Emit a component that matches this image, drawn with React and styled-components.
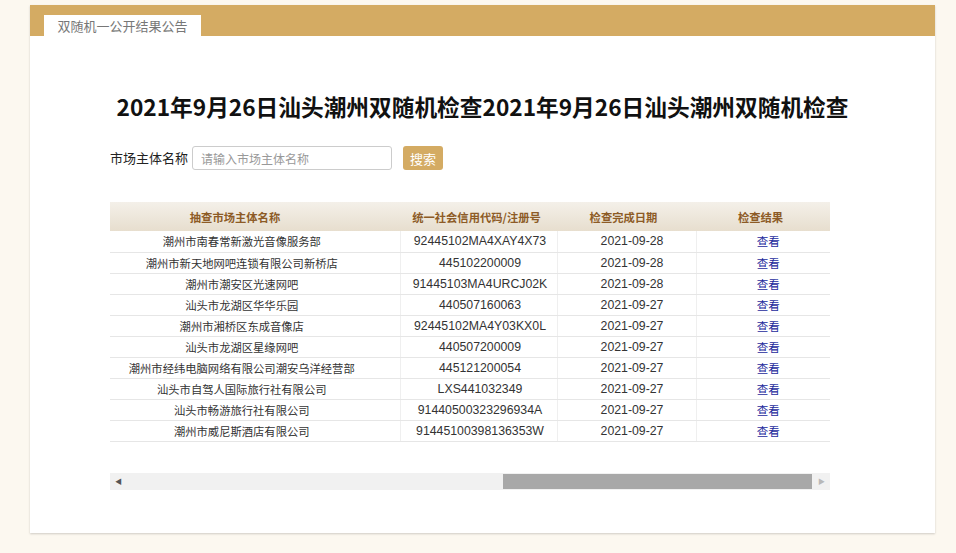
import React from 'react';
import styled, { createGlobalStyle } from 'styled-components';

const GlobalStyle = createGlobalStyle`
	html, body {
		margin: 0;
		padding: 0;
		background: #fcf8f0;
		font-family: "Liberation Sans", "Noto Sans CJK SC", sans-serif;
	}
`;

const rows = [
	{ name: '潮州市南春常新激光音像服务部', code: '92445102MA4XAY4X73', date: '2021-09-28' },
	{ name: '潮州市新天地网吧连锁有限公司新桥店', code: '445102200009', date: '2021-09-28' },
	{ name: '潮州市潮安区光速网吧', code: '91445103MA4URCJ02K', date: '2021-09-28' },
	{ name: '汕头市龙湖区华华乐园', code: '440507160063', date: '2021-09-27' },
	{ name: '潮州市湘桥区东成音像店', code: '92445102MA4Y03KX0L', date: '2021-09-27' },
	{ name: '汕头市龙湖区星缘网吧', code: '440507200009', date: '2021-09-27' },
	{ name: '潮州市经纬电脑网络有限公司潮安乌洋经营部', code: '445121200054', date: '2021-09-27' },
	{ name: '汕头市自驾人国际旅行社有限公司', code: 'LXS441032349', date: '2021-09-27' },
	{ name: '汕头市畅游旅行社有限公司', code: '91440500323296934A', date: '2021-09-27' },
	{ name: '潮州市威尼斯酒店有限公司', code: '91445100398136353W', date: '2021-09-27' }
];

// column widths and the small text shifts the original page has
const cols = [
	{ width: 290, th: '0 40px 0 0', td: '0 26px 0 0' },
	{ width: 157, th: '0 4px 0 0', td: '0 0 0 3px' },
	{ width: 139, th: '0 6px 0 0', td: '0 0 0 11px' },
	{ width: 134, th: '0 5px 0 0', td: '0 0 0 10px' }
];

const Page = styled.div`
	padding: 5px 21px 20px 30px;
`;

const Card = styled.div`
	background: #fff;
	height: 528px;
	box-shadow: 0 1px 2px rgba(0, 0, 0, 0.18);
	display: flex;
	flex-direction: column;
`;

const TabBar = styled.div`
	height: 31px;
	background: #d4ab63;
	display: flex;
	align-items: flex-end;
	padding-left: 14px;
`;

const Tab = styled.div`
	width: 157px;
	height: 21px;
	background: #fff;
	color: #777;
	font-size: 13px;
	line-height: 21px;
	text-align: center;
	font-family: "Noto Sans CJK SC", sans-serif;
`;

const Body = styled.div`
	padding: 0 0 0 80px;
`;

const Title = styled.h1`
	margin: 54px 0 0 -80px;
	font-size: 22.7px;
	line-height: 34px;
	font-weight: 700;
	text-align: center;
	color: #111;
	font-family: "Noto Sans CJK SC", sans-serif;
`;

const SearchRow = styled.div`
	display: flex;
	align-items: center;
	margin-top: 22px;
	height: 24px;
`;

const Label = styled.span`
	font-size: 13px;
	color: #222;
	margin-right: 4px;
	margin-top: -2px;
	font-family: "Noto Sans CJK SC", sans-serif;
`;

const Input = styled.input`
	box-sizing: border-box;
	width: 200px;
	height: 24px;
	border: 1px solid #ccc;
	border-radius: 3px;
	padding: 0 8px;
	font-size: 12px;
	font-family: "Noto Sans CJK SC", sans-serif;
	outline: none;
	&::placeholder {
		color: #999;
	}
`;

const Button = styled.button`
	margin-left: 11px;
	width: 40px;
	height: 24px;
	border: none;
	border-radius: 3px;
	background: #d4ab63;
	color: #fff;
	font-size: 13px;
	padding: 0;
	font-family: "Noto Sans CJK SC", sans-serif;
`;

const TableWrap = styled.div`
	width: 720px;
	margin-top: 32px;
`;

const Table = styled.table`
	width: 720px;
	border-collapse: collapse;
	table-layout: fixed;
`;

const Th = styled.th`
	height: 29px;
	padding: ${(props) => props.pad};
	font-size: 11.3px;
	font-weight: 700;
	color: #8d5b26;
	background: linear-gradient(#f4f0e9, #e7dece);
	font-family: "Noto Sans CJK SC", sans-serif;
`;

const Td = styled.td`
	box-sizing: border-box;
	height: 21px;
	padding: ${(props) => props.pad};
	font-size: ${(props) => (props.cjk ? '11.3px' : '12.3px')};
	color: #333;
	text-align: center;
	border-bottom: 1px solid #e6e6e6;
	border-left: ${(props) => (props.first ? 'none' : '1px solid #efefef')};
	white-space: nowrap;
	overflow: hidden;
`;

const Link = styled.a`
	color: #1c2a9c;
	font-size: 11.5px;
	text-decoration: none;
	font-family: "Noto Sans CJK SC", sans-serif;
`;

const Scrollbar = styled.div`
	display: flex;
	align-items: stretch;
	height: 17px;
	margin-top: 31px;
	background: #f1f1f1;
`;

const Arrow = styled.div`
	width: 17px;
	display: flex;
	align-items: center;
	justify-content: center;
	font-size: 7px;
	color: ${(props) => (props.dim ? '#b8b8b8' : '#555')};
`;

const Track = styled.div`
	flex: 1;
	display: flex;
	align-items: center;
	padding: 0 1px;
`;

const Thumb = styled.div`
	height: 15px;
	width: 309px;
	margin-left: 375px;
	background: #a8a8a8;
`;

export default function App() {
	return (
		<>
			<GlobalStyle />
			<Page>
				<Card>
					<TabBar>
						<Tab>双随机一公开结果公告</Tab>
					</TabBar>
					<Body>
						<Title>2021年9月26日汕头潮州双随机检查2021年9月26日汕头潮州双随机检查</Title>
						<SearchRow>
							<Label>市场主体名称</Label>
							<Input placeholder="请输入市场主体名称" />
							<Button>搜索</Button>
						</SearchRow>
						<TableWrap>
							<Table>
								<colgroup>
									{cols.map((c, i) => (
										<col key={i} style={{ width: c.width }} />
									))}
								</colgroup>
								<thead>
									<tr>
										<Th pad={cols[0].th}>抽查市场主体名称</Th>
										<Th pad={cols[1].th}>统一社会信用代码/注册号</Th>
										<Th pad={cols[2].th}>检查完成日期</Th>
										<Th pad={cols[3].th}>检查结果</Th>
									</tr>
								</thead>
								<tbody>
									{rows.map((r) => (
										<tr key={r.code}>
											<Td first cjk pad={cols[0].td}>{r.name}</Td>
											<Td pad={cols[1].td}>{r.code}</Td>
											<Td pad={cols[2].td}>{r.date}</Td>
											<Td pad={cols[3].td}><Link href="#">查看</Link></Td>
										</tr>
									))}
								</tbody>
							</Table>
							<Scrollbar>
								<Arrow>◀</Arrow>
								<Track>
									<Thumb />
								</Track>
								<Arrow dim>▶</Arrow>
							</Scrollbar>
						</TableWrap>
					</Body>
				</Card>
			</Page>
		</>
	);
}
